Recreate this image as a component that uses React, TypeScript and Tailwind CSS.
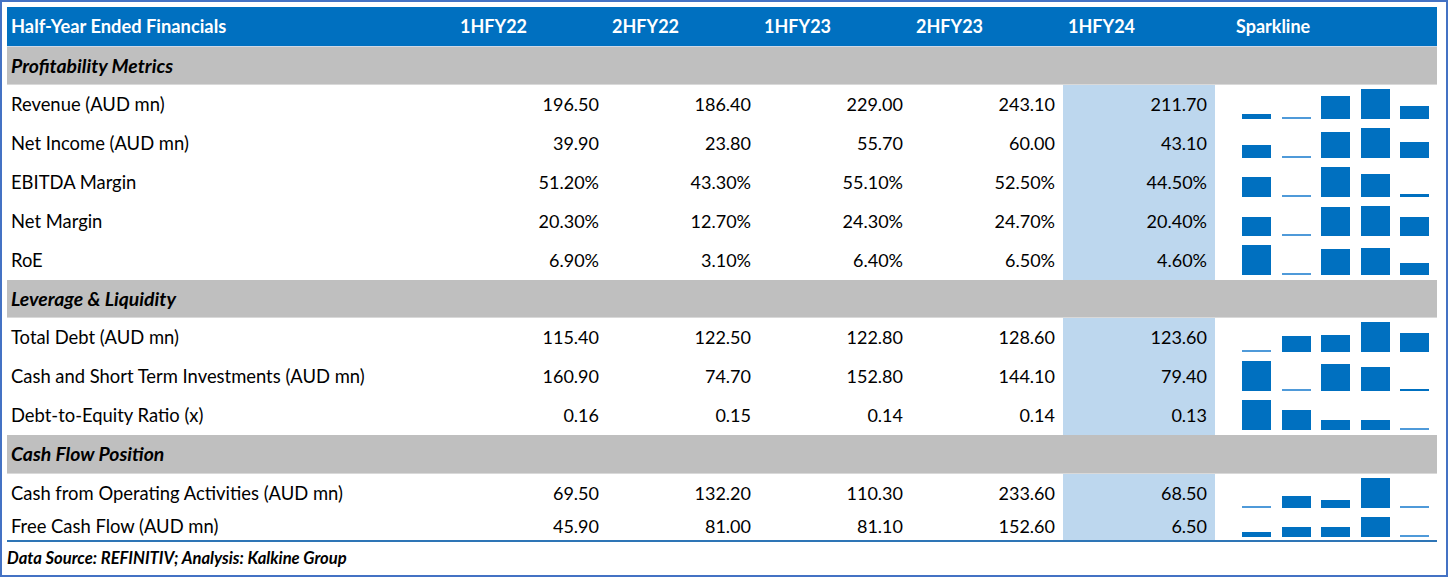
const years = ["1HFY22", "2HFY22", "1HFY23", "2HFY23", "1HFY24"];

type Row = { label: string; values: number[]; pct?: boolean; short?: boolean };
type Section = { title: string; rows: Row[] };

const sections: Section[] = [
  {
    title: "Profitability Metrics",
    rows: [
      { label: "Revenue (AUD mn)", values: [196.5, 186.4, 229.0, 243.1, 211.7] },
      { label: "Net Income (AUD mn)", values: [39.9, 23.8, 55.7, 60.0, 43.1] },
      { label: "EBITDA Margin", values: [51.2, 43.3, 55.1, 52.5, 44.5], pct: true },
      { label: "Net Margin", values: [20.3, 12.7, 24.3, 24.7, 20.4], pct: true },
      { label: "RoE", values: [6.9, 3.1, 6.4, 6.5, 4.6], pct: true },
    ],
  },
  {
    title: "Leverage & Liquidity",
    rows: [
      { label: "Total Debt (AUD mn)", values: [115.4, 122.5, 122.8, 128.6, 123.6] },
      { label: "Cash and Short Term Investments (AUD mn)", values: [160.9, 74.7, 152.8, 144.1, 79.4] },
      { label: "Debt-to-Equity Ratio (x)", values: [0.16, 0.15, 0.14, 0.14, 0.13] },
    ],
  },
  {
    title: "Cash Flow Position",
    rows: [
      { label: "Cash from Operating Activities (AUD mn)", values: [69.5, 132.2, 110.3, 233.6, 68.5] },
      { label: "Free Cash Flow (AUD mn)", values: [45.9, 81.0, 81.1, 152.6, 6.5], short: true },
    ],
  },
];

function Sparkline({ values, max }: { values: number[]; max: number }) {
  const lo = Math.min(...values);
  const hi = Math.max(...values);
  return (
    <div className="flex items-end gap-[10.5px] pl-[27px]">
      {values.map((v, i) => {
        const h = hi === lo ? 0 : ((v - lo) / (hi - lo)) * max;
        return h < 1.5 ? (
          <div key={i} className="w-[29px] h-[2px] bg-[#4f9ad9]" />
        ) : (
          <div key={i} className="w-[29px] bg-[#0070c0]" style={{ height: `${h}px` }} />
        );
      })}
    </div>
  );
}

function DataRow({ row }: { row: Row }) {
  const fmt = (v: number) => (row.pct ? `${v.toFixed(2)}%` : v.toFixed(2));
  return (
    <div className={`flex ${row.short ? "h-[27px]" : "h-[39px]"}`}>
      <div className="w-[448px] pl-1 flex items-center text-[18.4px]">{row.label}</div>
      {row.values.map((v, i) => (
        <div
          key={i}
          className={`w-[152px] pr-2 flex items-center justify-end ${i === 4 ? "bg-[#bdd7ee]" : ""}`}
        >
          {fmt(v)}
        </div>
      ))}
      <div className={`w-[222px] flex items-end ${row.short ? "pb-[3px]" : "pb-[5px]"}`}>
        <Sparkline values={row.values} max={row.short ? 20 : 30} />
      </div>
    </div>
  );
}

export default function App() {
  return (
    <div
      className="w-[1448px] h-[577px] border-2 border-[#4472c4] bg-white p-[5px] text-black text-[18px]"
      style={{ fontFamily: "Lato, 'Open Sans', sans-serif" }}
    >
      <div className="w-[1430px]">
        <div className="flex h-[40px] bg-[#0070c0] text-white font-bold border-b border-[#cfd8e6]">
          <div className="w-[448px] pl-1 flex items-center text-[18.3px]">Half-Year Ended Financials</div>
          {years.map((y) => (
            <div key={y} className="w-[152px] pl-[5px] flex items-center">
              {y}
            </div>
          ))}
          <div className="w-[222px] pl-[21px] flex items-center">Sparkline</div>
        </div>

        {sections.map((s, si) => (
          <div key={s.title}>
            <div
              className={`${si === 2 ? "h-[39px]" : "h-[38px]"} bg-[#bfbfbf] border-b border-[#d9d9d9] pl-1 flex items-center font-bold italic text-[19.4px]`}
            >
              {s.title}
            </div>
            {s.rows.map((r) => (
              <DataRow key={r.label} row={r} />
            ))}
          </div>
        ))}

        <div className="h-[2px] bg-[#2e75b6]" />
        <div className="h-[33px] flex items-center text-[16.6px] font-bold italic">
          Data Source: REFINITIV; Analysis: Kalkine Group
        </div>
      </div>
    </div>
  );
}
